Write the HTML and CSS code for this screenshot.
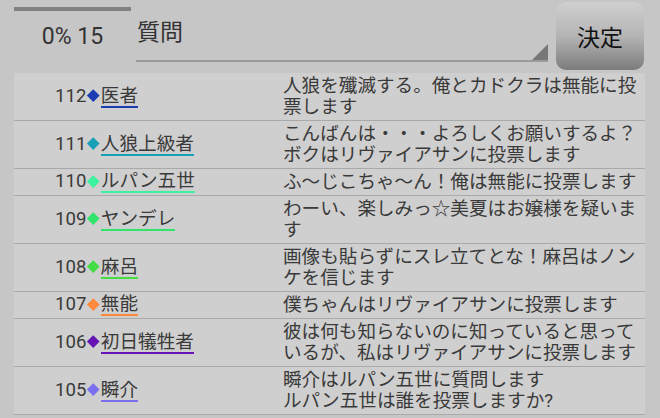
FILE: index.html
```html
<!DOCTYPE html>
<html lang="ja">
<head>
    <meta charset="UTF-8">
    <title>投票</title>
    <link rel="stylesheet" href="styles.css">
</head>
<body>
    <div class="header">
        <div class="stat">
            <div class="stat-bar"></div>
            <div class="stat-text">0% 15</div>
        </div>
        <div class="spinner">質問</div>
        <button class="submit">決定</button>
    </div>

    <div class="log">
        <div class="row">
            <div class="who"><span class="line"><span class="no">112</span><span class="dia c112"></span><span class="nm c112">医者</span></span></div>
            <div class="msg">人狼を殲滅する。俺とカドクラは無能に投票します</div>
        </div>
        <div class="row">
            <div class="who"><span class="line"><span class="no">111</span><span class="dia c111"></span><span class="nm c111">人狼上級者</span></span></div>
            <div class="msg">こんばんは・・・よろしくお願いするよ？ボクはリヴァイアサンに投票します</div>
        </div>
        <div class="row">
            <div class="who"><span class="line"><span class="no">110</span><span class="dia c110"></span><span class="nm c110">ルパン五世</span></span></div>
            <div class="msg">ふ〜じこちゃ〜ん！俺は無能に投票します</div>
        </div>
        <div class="row">
            <div class="who"><span class="line"><span class="no">109</span><span class="dia c109"></span><span class="nm c109">ヤンデレ</span></span></div>
            <div class="msg">わーい、楽しみっ☆美夏はお嬢様を疑います</div>
        </div>
        <div class="row">
            <div class="who"><span class="line"><span class="no">108</span><span class="dia c108"></span><span class="nm c108">麻呂</span></span></div>
            <div class="msg">画像も貼らずにスレ立てとな！麻呂はノンケを信じます</div>
        </div>
        <div class="row">
            <div class="who"><span class="line"><span class="no">107</span><span class="dia c107"></span><span class="nm c107">無能</span></span></div>
            <div class="msg">僕ちゃんはリヴァイアサンに投票します</div>
        </div>
        <div class="row">
            <div class="who"><span class="line"><span class="no">106</span><span class="dia c106"></span><span class="nm c106">初日犠牲者</span></span></div>
            <div class="msg">彼は何も知らないのに知っていると思っているが、私はリヴァイアサンに投票します</div>
        </div>
        <div class="row">
            <div class="who"><span class="line"><span class="no">105</span><span class="dia c105"></span><span class="nm c105">瞬介</span></span></div>
            <div class="msg">瞬介はルパン五世に質問します<br>ルパン五世は誰を投票しますか?</div>
        </div>
    </div>
</body>
</html>
```

FILE: styles.css
```css
:root {
    --bg-color: #c6c6c6;
    --list-bg: #cfcfcf;
    --text-color: #3a3a3a;
    --line-color: #a9a9a9;
}

body {
    margin: 0;
    width: 660px;
    height: 418px;
    overflow: hidden;
    background-color: var(--bg-color);
    color: var(--text-color);
    font-family: Roboto, "Noto Sans CJK JP", sans-serif;
}

/* header */
.header {
    display: flex;
    align-items: flex-start;
    height: 73px;
}

.stat {
    width: 117px;
    margin-left: 14px;
}

.stat-bar {
    margin-top: 7px;
    height: 4px;
    background: #808080;
}

.stat-text {
    margin-top: 12px;
    line-height: 28px;
    font-size: 23px;
    text-align: center;
    color: #333;
}

.spinner {
    position: relative;
    width: 411px;
    height: 42px;
    margin-left: 5px;
    padding: 18px 0 0 1px;
    border-bottom: 2px solid #9a9a9a;
    font-size: 23px;
    line-height: 30px;
    color: #333;
}

.spinner::after {
    content: "";
    position: absolute;
    right: 0;
    bottom: 0;
    border-left: 16px solid transparent;
    border-bottom: 16px solid #777;
}

.submit {
    width: 88px;
    height: 68px;
    margin: 2px 0 0 8px;
    border: none;
    border-radius: 10px;
    background: linear-gradient(#d0d0d0, #b4b4b4 50%, #7c7c7c);
    font-family: inherit;
    font-size: 23px;
    color: #111;
    padding: 0;
}

/* log list */
.log {
    width: 631px;
    margin-left: 14px;
    background: var(--list-bg);
}

.row {
    display: grid;
    grid-template-columns: 269px 362px;
    border-bottom: 1px solid var(--line-color);
    font-size: 18.6px;
}

.who {
    display: flex;
    align-items: center;
    padding-left: 41px;
}

.line {
    line-height: 20px;
    white-space: nowrap;
}

.dia {
    display: inline-block;
    width: 8.5px;
    height: 8.5px;
    margin: 0 3px 0 3px;
    transform: rotate(45deg);
    vertical-align: 2px;
}

.nm {
    display: inline-block;
    border-bottom: 2px solid;
}

.msg {
    padding: 3px 0 2px;
    line-height: 21px;
}

.dia.c112 { background: #1c3cb2; }
.dia.c111 { background: #1aa0b6; }
.dia.c110 { background: #3cf29e; }
.dia.c109 { background: #30e46c; }
.dia.c108 { background: #44de44; }
.dia.c107 { background: #ff8a3c; }
.dia.c106 { background: #6614b6; }
.dia.c105 { background: #7a70f0; }

.nm.c112 { border-color: #1c3cb2; }
.nm.c111 { border-color: #1aa0b6; }
.nm.c110 { border-color: #3cf29e; }
.nm.c109 { border-color: #30e46c; }
.nm.c108 { border-color: #44de44; }
.nm.c107 { border-color: #ff8a3c; }
.nm.c106 { border-color: #6614b6; }
.nm.c105 { border-color: #7a70f0; }
```
